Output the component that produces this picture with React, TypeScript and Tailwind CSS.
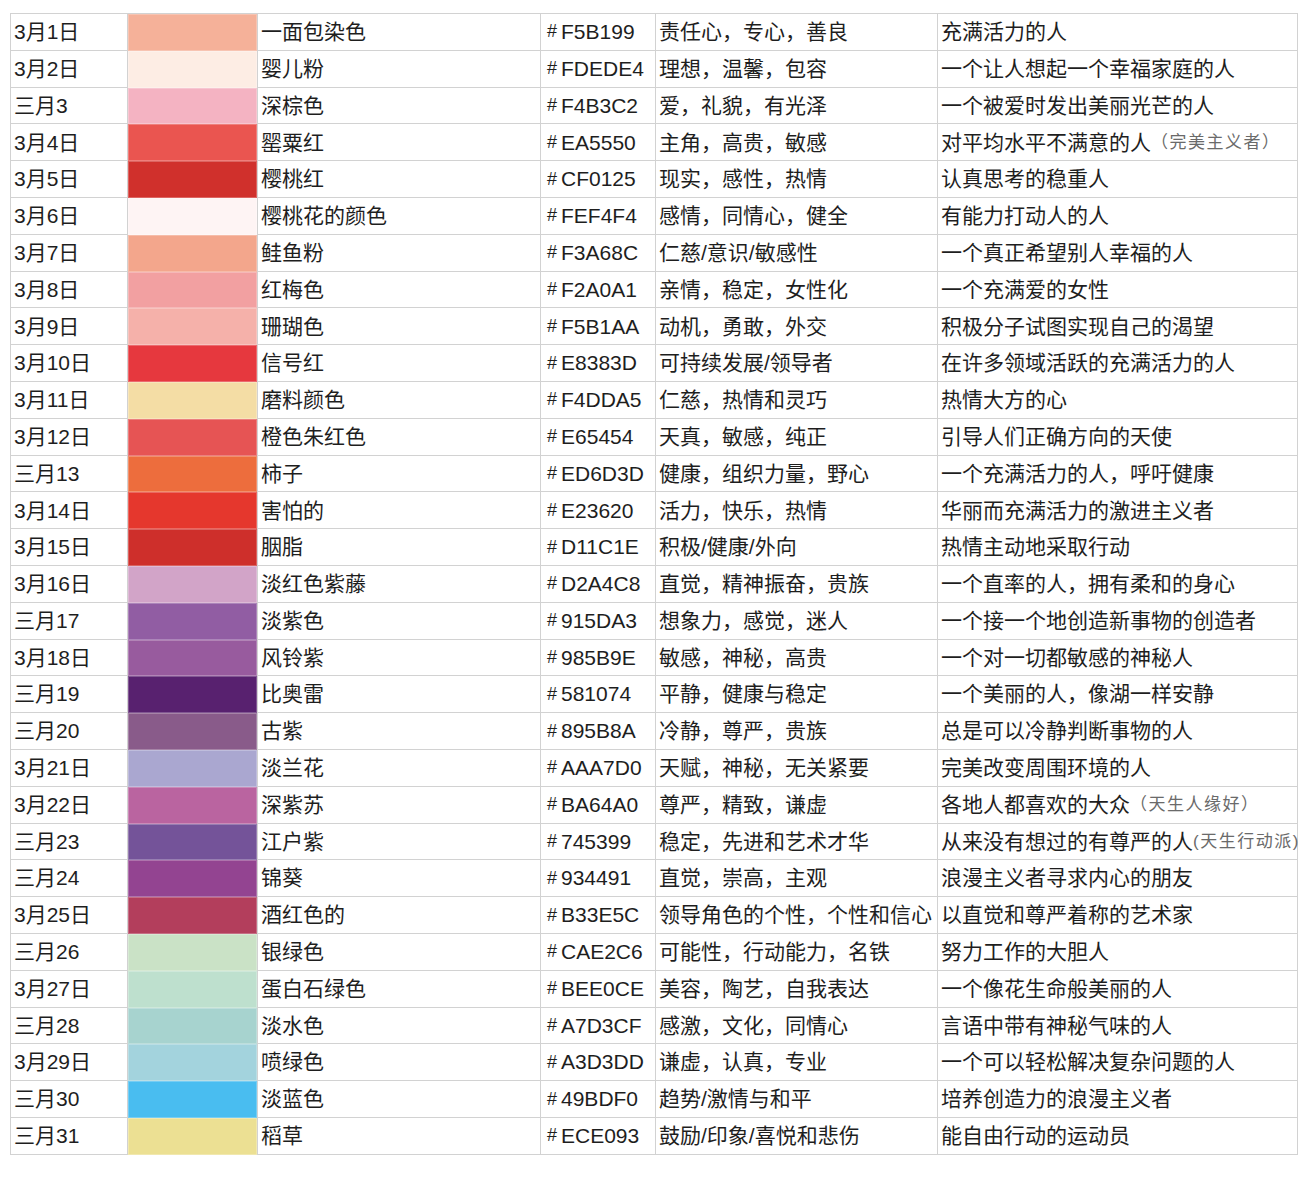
import React from "react";

type Row = [string, string, string, string, string, string?];

const rows: Row[] = [
  ["3月1日", "一面包染色", "F5B199", "责任心，专心，善良", "充满活力的人"],
  ["3月2日", "婴儿粉", "FDEDE4", "理想，温馨，包容", "一个让人想起一个幸福家庭的人"],
  ["三月3", "深棕色", "F4B3C2", "爱，礼貌，有光泽", "一个被爱时发出美丽光芒的人"],
  ["3月4日", "罂粟红", "EA5550", "主角，高贵，敏感", "对平均水平不满意的人", "（完美主义者）"],
  ["3月5日", "樱桃红", "CF0125", "现实，感性，热情", "认真思考的稳重人"],
  ["3月6日", "樱桃花的颜色", "FEF4F4", "感情，同情心，健全", "有能力打动人的人"],
  ["3月7日", "鲑鱼粉", "F3A68C", "仁慈/意识/敏感性", "一个真正希望别人幸福的人"],
  ["3月8日", "红梅色", "F2A0A1", "亲情，稳定，女性化", "一个充满爱的女性"],
  ["3月9日", "珊瑚色", "F5B1AA", "动机，勇敢，外交", "积极分子试图实现自己的渴望"],
  ["3月10日", "信号红", "E8383D", "可持续发展/领导者", "在许多领域活跃的充满活力的人"],
  ["3月11日", "磨料颜色", "F4DDA5", "仁慈，热情和灵巧", "热情大方的心"],
  ["3月12日", "橙色朱红色", "E65454", "天真，敏感，纯正", "引导人们正确方向的天使"],
  ["三月13", "柿子", "ED6D3D", "健康，组织力量，野心", "一个充满活力的人，呼吁健康"],
  ["3月14日", "害怕的", "E23620", "活力，快乐，热情", "华丽而充满活力的激进主义者"],
  ["3月15日", "胭脂", "D11C1E", "积极/健康/外向", "热情主动地采取行动"],
  ["3月16日", "淡红色紫藤", "D2A4C8", "直觉，精神振奋，贵族", "一个直率的人，拥有柔和的身心"],
  ["三月17", "淡紫色", "915DA3", "想象力，感觉，迷人", "一个接一个地创造新事物的创造者"],
  ["3月18日", "风铃紫", "985B9E", "敏感，神秘，高贵", "一个对一切都敏感的神秘人"],
  ["三月19", "比奥雷", "581074", "平静，健康与稳定", "一个美丽的人，像湖一样安静"],
  ["三月20", "古紫", "895B8A", "冷静，尊严，贵族", "总是可以冷静判断事物的人"],
  ["3月21日", "淡兰花", "AAA7D0", "天赋，神秘，无关紧要", "完美改变周围环境的人"],
  ["3月22日", "深紫苏", "BA64A0", "尊严，精致，谦虚", "各地人都喜欢的大众", "（天生人缘好）"],
  ["三月23", "江户紫", "745399", "稳定，先进和艺术才华", "从来没有想过的有尊严的人", "(天生行动派)"],
  ["三月24", "锦葵", "934491", "直觉，崇高，主观", "浪漫主义者寻求内心的朋友"],
  ["3月25日", "酒红色的", "B33E5C", "领导角色的个性，个性和信心", "以直觉和尊严着称的艺术家"],
  ["三月26", "银绿色", "CAE2C6", "可能性，行动能力，名铁", "努力工作的大胆人"],
  ["3月27日", "蛋白石绿色", "BEE0CE", "美容，陶艺，自我表达", "一个像花生命般美丽的人"],
  ["三月28", "淡水色", "A7D3CF", "感激，文化，同情心", "言语中带有神秘气味的人"],
  ["3月29日", "喷绿色", "A3D3DD", "谦虚，认真，专业", "一个可以轻松解决复杂问题的人"],
  ["三月30", "淡蓝色", "49BDF0", "趋势/激情与和平", "培养创造力的浪漫主义者"],
  ["三月31", "稻草", "ECE093", "鼓励/印象/喜悦和悲伤", "能自由行动的运动员"],
];

// colours as they appear in the picture (slightly different from nominal hex)
const shown: Record<string, string> = {
  CF0125: "#D0302C",
  E23620: "#E5372D",
  D11C1E: "#CE2F2B",
  "581074": "#58216F",
  E8383D: "#E6383E",
};

const cell =
  "flex items-center border-r border-b border-[#d2d2d2] pl-[3px] whitespace-nowrap";

export default function App() {
  return (
    <div
      className="w-[1314px] h-[1180px] bg-white pt-[13px] pl-[10px] text-[21px] text-[#1e1e1e]"
      style={{ fontFamily: '"Liberation Sans", "Noto Sans CJK SC", sans-serif' }}
    >
      <div className="w-[1288px] border-t border-l border-[#d2d2d2]">
        {rows.map((r, i) => (
          <div key={i} className="flex h-[36.8px]">
            <div className={`${cell} w-[117px]`}>{r[0]}</div>
            <div
              className="w-[130px] border-r border-[#d2d2d2] shadow-[inset_0_0_0_1px_rgba(255,255,255,0.25)]"
              style={{ backgroundColor: shown[r[2]] ?? `#${r[2]}` }}
            />
            <div className={`${cell} w-[283px]`}>{r[1]}</div>
            <div className={`${cell} w-[115px] pl-[6px]`}>
              <span className="text-[18px] mr-[4px]">#</span>
              {r[2]}
            </div>
            <div className={`${cell} w-[282px]`}>{r[3]}</div>
            <div className={`${cell} w-[360px] overflow-visible`}>
              {r[4]}
              {r[5] && (
                <span className="text-[17px] tracking-[1.5px] text-[#6a6a6a]">
                  {r[5]}
                </span>
              )}
            </div>
          </div>
        ))}
      </div>
    </div>
  );
}
